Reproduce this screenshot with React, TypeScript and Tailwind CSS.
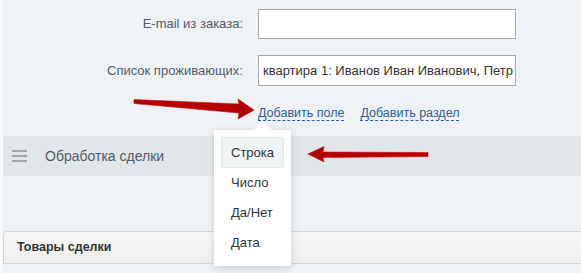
const font = { fontFamily: '"Liberation Sans", Arial, sans-serif' };

const Arrows = () => (
  <svg className="absolute inset-0 pointer-events-none" width="581" height="273" viewBox="0 0 581 273">
    <g fill="#b30000" stroke="#c41010" strokeWidth="0.6" strokeLinejoin="round">
      {/* pointing to "Добавить поле" */}
      <polygon points="131,99.5 236,104 235,99 251,110 235,119 236,113 131,103.5" />
      {/* pointing to "Строка" */}
      <polygon points="425,152.5 320,152 321,146.5 305,154 321,162 320,157.5 425,156.5" />
    </g>
  </svg>
);

const App = () => {
  return (
    <div className="relative w-[581px] h-[273px] overflow-hidden bg-[#eef2f4] border-l-[3px] border-l-[#f7f9fa]" style={font}>
      {/* form */}
      <div className="pt-[9px]">
        <div className="flex items-center h-[30px]">
          <div className="w-[240px] text-right text-[13px] text-[#535c69]">E-mail из заказа:</div>
          <div className="ml-[15px] w-[258px] h-[30px] bg-white border border-[#a8a8a8]" />
        </div>
        <div className="flex items-center h-[31px] mt-[16px]">
          <div className="w-[240px] text-right text-[13px] text-[#535c69]">Список проживающих:</div>
          <div className="ml-[15px] w-[258px] h-[31px] bg-white border border-[#a8a8a8] overflow-hidden whitespace-nowrap pl-[4px] leading-[29px] text-[13px] text-[#333]">
            квартира 1: Иванов Иван Иванович, Петр
          </div>
        </div>
        <div className="flex h-[15px] mt-[20px] ml-[255px] text-[12.5px] text-[#2f5d99] leading-[14px]">
          <span className="border-b border-dashed border-[#2f5d99] h-[15px]">Добавить поле</span>
          <span className="ml-[16px] border-b border-dashed border-[#2f5d99] h-[15px]">Добавить раздел</span>
        </div>
      </div>

      {/* section bar */}
      <div className="mt-[15px] h-[40px] bg-[#e1e6e9] flex items-center">
        <div className="ml-[9px] w-[15px] flex flex-col gap-[3px]">
          <div className="h-[2px] bg-[#a2a7ab]" />
          <div className="h-[2px] bg-[#a2a7ab]" />
          <div className="h-[2px] bg-[#a2a7ab]" />
        </div>
        <div className="ml-[18px] text-[14px] text-[#535c69]">Обработка сделки</div>
      </div>

      {/* products panel */}
      <div className="mt-[55px] h-[33px] rounded-tl-[4px] border-t border-l border-b border-[#d6d6d6] bg-gradient-to-b from-[#f7f7f7] to-[#eeeeee] flex items-center">
        <div className="ml-[13px] text-[12.5px] font-bold text-[#333]">Товары сделки</div>
      </div>

      <Arrows />

      {/* dropdown */}
      <div className="absolute left-[211px] top-[130px] w-[77px] h-[136px] bg-white shadow-[0_2px_8px_rgba(0,0,0,0.15)] pt-[7px] px-[7px]">
        <div className="absolute -top-[9px] left-[40px] w-0 h-0 border-l-[9px] border-r-[9px] border-b-[9px] border-l-transparent border-r-transparent border-b-white" />
        <div className="flex flex-col text-[13px] text-[#333]">
          <div className="h-[31px] flex items-center pl-[9px] bg-[#f0f4f5] border border-[#e2e6e8] rounded-[2px]">Строка</div>
          <div className="h-[30px] flex items-center pl-[10px]">Число</div>
          <div className="h-[30px] flex items-center pl-[10px]">Да/Нет</div>
          <div className="h-[30px] flex items-center pl-[10px]">Дата</div>
        </div>
      </div>
    </div>
  );
};

export default App;
